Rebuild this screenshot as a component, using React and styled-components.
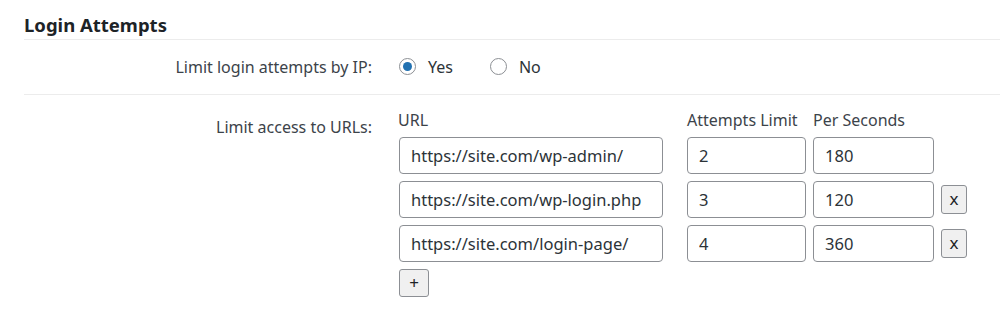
import React, { useState } from "react";
import styled, { createGlobalStyle } from "styled-components";

const GlobalStyle = createGlobalStyle`
  body {
    margin: 0;
    background: #fff;
    font-family: "Noto Sans", "Open Sans", sans-serif;
    color: #3c434a;
  }
`;

const Wrap = styled.div`
  padding: 0 0 0 24px;
  width: 976px;
`;

const Title = styled.h2`
  margin: 0;
  padding: 15px 0 4px;
  font-size: 18.5px;
  font-weight: 700;
  line-height: 20px;
  color: #1d2327;
  border-bottom: 1px solid #ececec;
`;

const Row = styled.div`
  display: grid;
  grid-template-columns: 348px 1fr;
  column-gap: 26px;
  align-items: ${(p) => (p.top ? "start" : "center")};
  min-height: ${(p) => (p.top ? "auto" : "54px")};
  padding: ${(p) => (p.top ? "15px 0 0" : "0")};
  border-bottom: ${(p) => (p.last ? "none" : "1px solid #ececec")};
`;

const Label = styled.div`
  text-align: right;
  font-size: 16px;
  line-height: 20px;
  color: #3c434a;
  padding-top: ${(p) => (p.offset ? `${p.offset}px` : "0")};
`;

const Radios = styled.div`
  display: flex;
  align-items: center;
  gap: 36px;
  padding-bottom: 1px;
`;

const RadioLabel = styled.label`
  display: flex;
  align-items: center;
  gap: 12px;
  font-size: 16px;
  line-height: 20px;
  color: #2c3338;
  cursor: pointer;
`;

const RadioDot = styled.span`
  width: 17px;
  height: 17px;
  box-sizing: border-box;
  border-radius: 50%;
  border: 1px solid #8c8f94;
  display: flex;
  align-items: center;
  justify-content: center;
  margin-left: 1px;

  &::after {
    content: "";
    width: 9px;
    height: 9px;
    border-radius: 50%;
    background: ${(p) => (p.checked ? "#2271b1" : "transparent")};
  }
`;

const UrlGrid = styled.div`
  display: grid;
  grid-template-columns: 282px 119px 121px 26px;
  column-gap: 7px;
  row-gap: 7px;
  align-items: center;
`;

const Head = styled.div`
  font-size: 16px;
  line-height: 20px;
  color: #3c434a;
  white-space: nowrap;
`;

const Field = styled.input`
  box-sizing: border-box;
  width: ${(p) => p.w}px;
  height: 37px;
  margin-left: ${(p) => p.ml || 0}px;
  padding: 0 11px;
  border: 1px solid #8c8f94;
  border-radius: 4px;
  font-family: "Noto Sans", "Open Sans", sans-serif;
  font-size: 16.5px;
  color: #2c3338;
  background: #fff;
  outline: none;
`;

const SmallButton = styled.button`
  box-sizing: border-box;
  width: ${(p) => p.w}px;
  height: ${(p) => p.h}px;
  margin-left: ${(p) => p.ml || 0}px;
  padding: 0 0 2px;
  border: 1px solid #8c8f94;
  border-radius: 3px;
  background: #f0f0f0;
  font-family: "Noto Sans", "Open Sans", sans-serif;
  font-size: 17px;
  line-height: 1;
  color: #1d2327;
  justify-self: start;
`;

const Empty = styled.div``;

const rules = [
  { url: "https://site.com/wp-admin/", limit: "2", secs: "180" },
  { url: "https://site.com/wp-login.php", limit: "3", secs: "120" },
  { url: "https://site.com/login-page/", limit: "4", secs: "360" },
];

export default function App() {
  const [byIp, setByIp] = useState(true);

  return (
    <>
      <GlobalStyle />
      <Wrap>
        <Title>Login Attempts</Title>
        <Row>
          <Label>Limit login attempts by IP:</Label>
          <Radios>
            <RadioLabel onClick={() => setByIp(true)}>
              <RadioDot checked={byIp} />
              Yes
            </RadioLabel>
            <RadioLabel onClick={() => setByIp(false)}>
              <RadioDot checked={!byIp} />
              No
            </RadioLabel>
          </Radios>
        </Row>
        <Row top last>
          <Label offset={7}>Limit access to URLs:</Label>
          <UrlGrid>
            <Head>URL</Head>
            <Head>Attempts Limit</Head>
            <Head>Per Seconds</Head>
            <Empty />
            {rules.map((r, i) => (
              <React.Fragment key={i}>
                <Field w={264} ml={1} defaultValue={r.url} />
                <Field w={119} defaultValue={r.limit} />
                <Field w={121} defaultValue={r.secs} />
                {i > 0 ? (
                  <SmallButton w={26} h={29}>
                    x
                  </SmallButton>
                ) : (
                  <Empty />
                )}
              </React.Fragment>
            ))}
            <SmallButton w={30} h={28} ml={1}>
              +
            </SmallButton>
          </UrlGrid>
        </Row>
      </Wrap>
    </>
  );
}
